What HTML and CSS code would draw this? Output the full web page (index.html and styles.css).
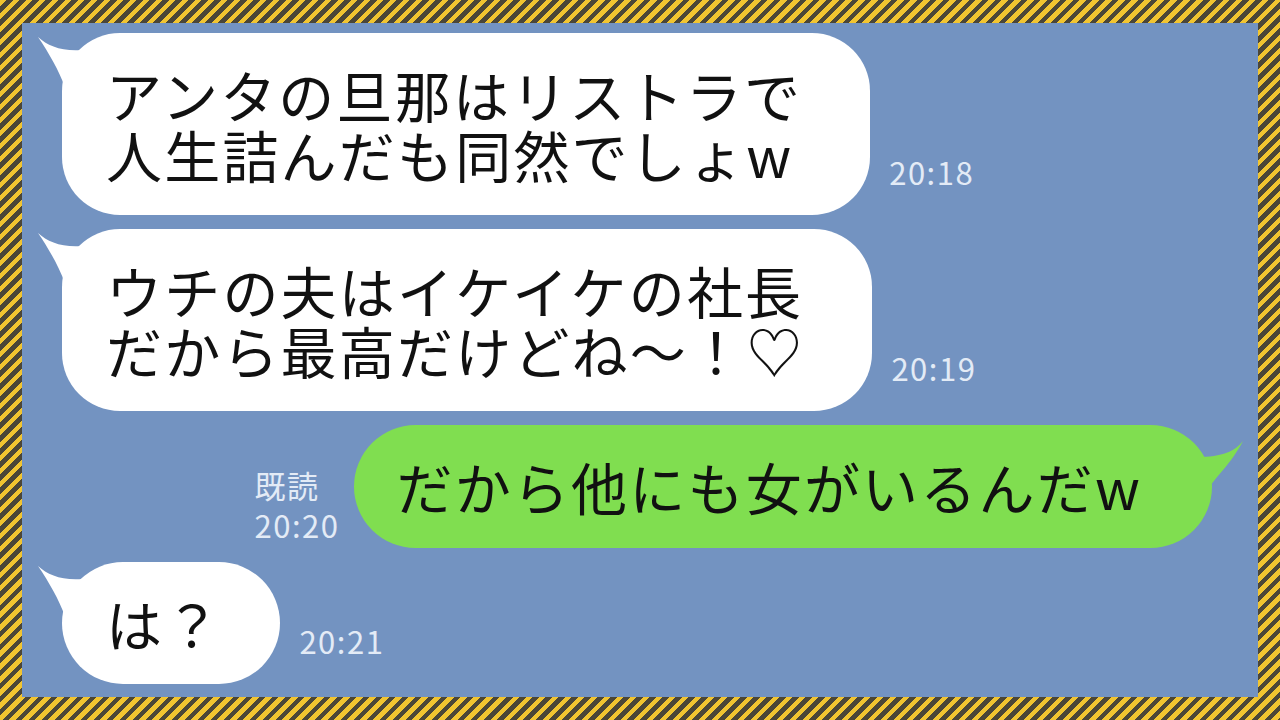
FILE: index.html
```html
<!DOCTYPE html>
<html lang="ja">
<head>
  <meta charset="UTF-8">
  <title>トーク</title>
  <link rel="stylesheet" href="styles.css">
</head>
<body>
  <div class="frame">
    <div class="chat">

      <div class="row left">
        <div class="bubble white">
          <svg class="tail" width="70" height="70" viewBox="0 0 70 70"><path d="M3,2 C14,12 30,18 56,14 L70,70 L30,70 L30,52 C24,36 14,18 3,2 Z" fill="#fff"/></svg>
          <p>アンタの旦那はリストラで<br>人生詰んだも同然でしょw</p>
        </div>
        <div class="meta">20:18</div>
      </div>

      <div class="row left">
        <div class="bubble white">
          <svg class="tail" width="70" height="70" viewBox="0 0 70 70"><path d="M3,2 C14,12 30,18 56,14 L70,70 L30,70 L30,52 C24,36 14,18 3,2 Z" fill="#fff"/></svg>
          <p>ウチの夫はイケイケの社長<br>だから最高だけどね～！♡</p>
        </div>
        <div class="meta">20:19</div>
      </div>

      <div class="row right">
        <div class="meta read">既読<br>20:20</div>
        <div class="bubble green">
          <svg class="tail" width="60" height="60" viewBox="0 0 60 60"><path d="M56,4 C48,14 36,20 10,20 L0,60 L18,60 C22,44 40,34 56,4 Z" fill="#80de50"/></svg>
          <p>だから他にも女がいるんだw</p>
        </div>
      </div>

      <div class="row left">
        <div class="bubble white short">
          <svg class="tail" width="70" height="70" viewBox="0 0 70 70"><path d="M3,2 C14,12 30,18 56,14 L70,70 L30,70 L30,52 C24,36 14,18 3,2 Z" fill="#fff"/></svg>
          <p>は？</p>
        </div>
        <div class="meta">20:21</div>
      </div>

    </div>
  </div>
</body>
</html>
```

FILE: styles.css
```css
body {
  margin: 0;
  width: 1280px;
  height: 720px;
  overflow: hidden;
  font-family: 'Noto Sans CJK JP', 'Noto Sans', sans-serif;
}
.frame {
  box-sizing: border-box;
  width: 1280px;
  height: 720px;
  padding: 23px 22px 23px 22px;
  background: repeating-linear-gradient(135deg, #f1c430 0, #f1c430 4.6px, #4b4637 4.6px, #4b4637 9.2px);
}
.chat {
  box-sizing: border-box;
  height: 100%;
  background: #7393c1;
  padding: 10px 46px 0 40px;
  display: flex;
  flex-direction: column;
  gap: 14px;
}
.row {
  display: flex;
  align-items: flex-end;
  gap: 19px;
}
.row.right {
  justify-content: flex-end;
  gap: 15px;
}
.bubble {
  position: relative;
  border-radius: 58px;
  padding: 31px 68px 31px 44px;
}
.bubble p {
  position: relative;
  margin: 0;
  font-size: 56px;
  line-height: 60px;
  letter-spacing: 2.2px;
  color: #111;
  white-space: nowrap;
}
.bubble.white {
  background: #fff;
}
.bubble.white .tail {
  position: absolute;
  left: -27px;
  top: 2px;
}
.bubble.short {
  padding: 31px 58px 31px 44px;
  border-radius: 62px;
}
.bubble.green {
  background: #80de50;
  border-radius: 62px;
  padding: 31px 70px 32px 42px;
}
.bubble.green .tail {
  position: absolute;
  right: -35px;
  top: 12px;
}
.meta {
  font-size: 31px;
  line-height: 40px;
  letter-spacing: 1.5px;
  color: #e3ebf6;
  margin-bottom: 23px;
}
.meta.read {
  margin-bottom: 3px;
}
```
